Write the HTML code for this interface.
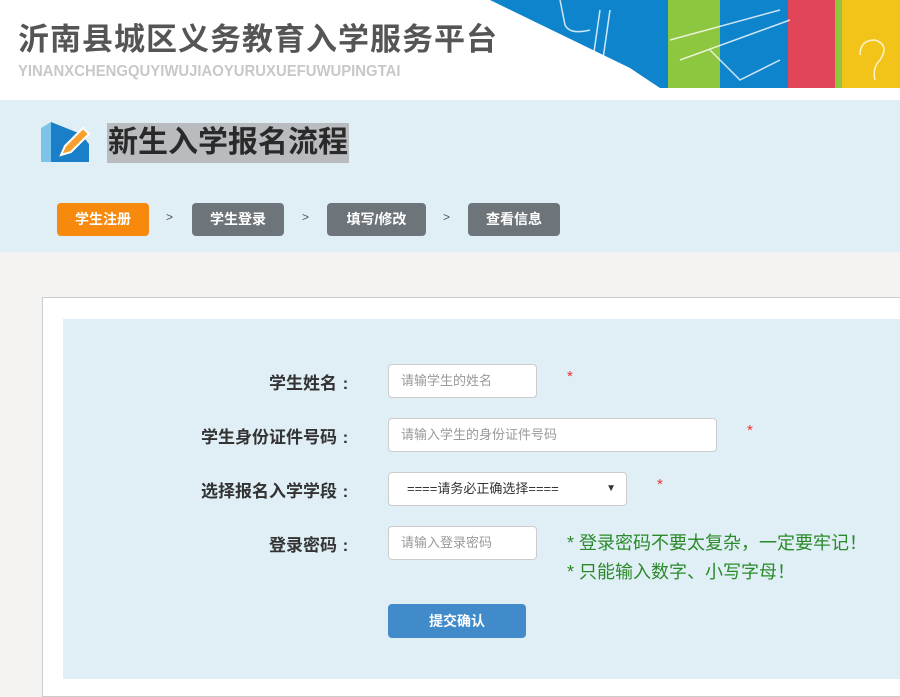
<!DOCTYPE html>
<html><head><meta charset="utf-8"><style>
*{margin:0;padding:0;box-sizing:border-box}
body{width:900px;height:671px;overflow:hidden;background:#f4f3f1;font-family:"Liberation Sans","Noto Sans CJK SC",sans-serif;position:relative}
.hdr{position:absolute;left:0;top:0;width:900px;height:100px;background:#fff}
.t1{position:absolute;left:18px;top:14px;font-size:31px;font-weight:bold;color:#555;letter-spacing:1px}
.t2{position:absolute;left:18px;top:63px;font-size:16px;color:#c8c8c8;font-weight:bold;transform:scaleX(.93);transform-origin:left}
.sec{position:absolute;left:0;top:100px;width:900px;height:152px;background:#e0eef6}
.h{position:absolute;left:107px;top:123px;height:40px;background:#b8bcbf;font-size:30px;font-weight:bold;color:#2a2a2a;line-height:40px;padding:0 1px}
.st{position:absolute;top:203px;height:33px;border-radius:4px;color:#fff;font-size:14px;font-weight:bold;text-align:center;line-height:33px;background:#6d747a}
.gt{position:absolute;top:210px;font-size:12px;color:#555}
.box{position:absolute;left:42px;top:297px;width:870px;height:400px;background:#fff;border:1px solid #ccc}
.pn{position:absolute;left:63px;top:319px;width:840px;height:360px;background:#e0eef6}
.lb{position:absolute;right:546px;font-size:17px;font-weight:bold;color:#333;white-space:nowrap}
.lb span{display:inline-block;width:17px;text-align:center}
.in{position:absolute;left:388px;height:34px;background:#fff;border:1px solid #ccc;border-radius:4px;font-size:13px;color:#999;line-height:32px;padding-left:12px}
.rs{position:absolute;color:#e33;font-size:15px}
.g{position:absolute;left:567px;font-size:18px;color:#2a8a2a;white-space:nowrap}
</style></head><body>
<div class="hdr">
<div class="t1">沂南县城区义务教育入学服务平台</div>
<div class="t2">YINANXCHENGQUYIWUJIAOYURUXUEFUWUPINGTAI</div>
<svg style="position:absolute;left:480px;top:0" width="420" height="90">
<polygon points="10,0 420,0 420,88 180,88 150,68" fill="#0d84cc"/>
<polygon points="188,0 240,0 240,88 188,88" fill="#8dc63f"/>
<polygon points="308,0 355,0 355,88 308,88" fill="#e0455a"/>
<polygon points="355,0 362,0 362,88 355,88" fill="#8dc63f"/>
<polygon points="362,0 420,0 420,88 362,88" fill="#f2c318"/>
<g fill="none" stroke="#fff" stroke-width="1.5" opacity=".8">
<path d="M80,0 L85,25 Q90,35 110,30"/><path d="M120,10 L110,80 M130,10 L120,80"/>
<path d="M190,40 L300,10 M200,60 L310,20"/><path d="M230,50 L260,80 L300,60"/>
<path d="M380,55 Q380,40 395,40 Q410,45 400,60 Q392,68 395,80"/>
</g>
</svg>
</div>
<div class="sec"></div>
<svg style="position:absolute;left:41px;top:122px" width="52" height="40">
<polygon points="0,6 10,0 10,40 0,40" fill="#7cc4ea"/>
<polygon points="10,0 40,12 48,22 48,40 10,40" fill="#1a7fc8"/>
<path d="M20,33 L24,24 L42,6 L48,12 L30,30 Z" fill="#f7a030" stroke="#fff" stroke-width="2"/>
</svg>
<div class="h">新生入学报名流程</div>
<div class="st" style="left:57px;width:92px;background:#f7890c">学生注册</div>
<div class="gt" style="left:166px">&gt;</div>
<div class="st" style="left:192px;width:92px">学生登录</div>
<div class="gt" style="left:302px">&gt;</div>
<div class="st" style="left:327px;width:99px">填写/修改</div>
<div class="gt" style="left:443px">&gt;</div>
<div class="st" style="left:468px;width:92px">查看信息</div>
<div class="box"></div>
<div class="pn"></div>
<div class="lb" style="top:369px">学生姓名<span>:</span></div>
<div class="in" style="top:364px;width:149px">请输学生的姓名</div>
<div class="rs" style="left:567px;top:368px">*</div>
<div class="lb" style="top:423px">学生身份证件号码<span>:</span></div>
<div class="in" style="top:418px;width:329px">请输入学生的身份证件号码</div>
<div class="rs" style="left:747px;top:422px">*</div>
<div class="lb" style="top:477px">选择报名入学学段<span>:</span></div>
<div class="in" style="top:472px;width:239px;color:#333;padding-left:18px">====请务必正确选择====<span style="position:absolute;right:10px;font-size:10px">▼</span></div>
<div class="rs" style="left:657px;top:476px">*</div>
<div class="lb" style="top:531px">登录密码<span>:</span></div>
<div class="in" style="top:526px;width:149px">请输入登录密码</div>
<div class="g" style="top:529px">* 登录密码不要太复杂，一定要牢记！</div>
<div class="g" style="top:558px">* 只能输入数字、小写字母！</div>
<div style="position:absolute;left:388px;top:604px;width:138px;height:34px;background:#428bca;border-radius:4px;color:#fff;font-size:14px;font-weight:bold;text-align:center;line-height:34px">提交确认</div>
</body></html>
